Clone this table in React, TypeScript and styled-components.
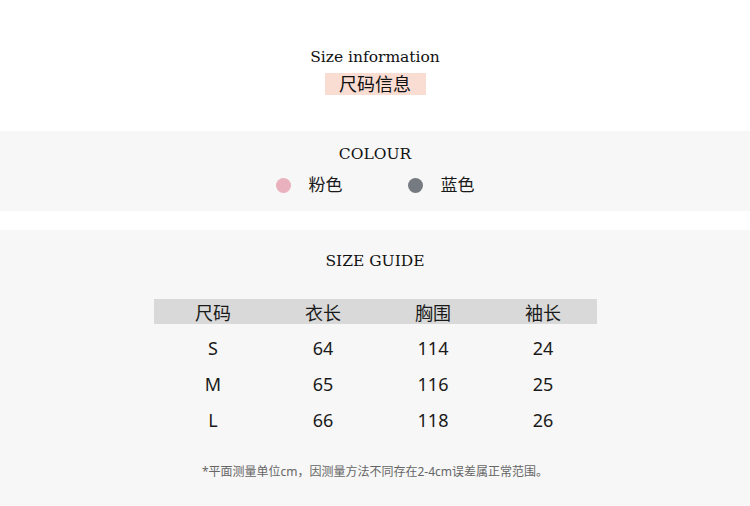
import React from "react";
import styled, { createGlobalStyle } from "styled-components";

const GlobalStyle = createGlobalStyle`
  html, body {
    margin: 0;
    padding: 0;
    background: #ffffff;
  }
  body {
    font-family: "Noto Sans", "Noto Sans CJK SC", sans-serif;
    color: #1a1a1a;
  }
`;

const colours = [
  { name: "粉色", color: "#e8b1bd" },
  { name: "蓝色", color: "#767b81" }
];

const headers = ["尺码", "衣长", "胸围", "袖长"];

const rows = [
  ["S", "64", "114", "24"],
  ["M", "65", "116", "25"],
  ["L", "66", "118", "26"]
];

const App: React.FunctionComponent = () => {
  return (
    <Page>
      <GlobalStyle />
      <Intro>
        <SerifTitle>Size information</SerifTitle>
        <Tag>尺码信息</Tag>
      </Intro>
      <ColourBand>
        <SerifTitle>COLOUR</SerifTitle>
        <Swatches>
          {colours.map(c => (
            <Swatch key={c.name}>
              <Dot color={c.color} />
              <SwatchName>{c.name}</SwatchName>
            </Swatch>
          ))}
        </Swatches>
      </ColourBand>
      <GuideBand>
        <SerifTitle>SIZE GUIDE</SerifTitle>
        <Table>
          <HeadRow>
            {headers.map(h => (
              <Cell key={h}>{h}</Cell>
            ))}
          </HeadRow>
          {rows.map(r => (
            <BodyRow key={r[0]}>
              {r.map((v, i) => (
                <Cell key={i}>{v}</Cell>
              ))}
            </BodyRow>
          ))}
        </Table>
        <Note>*平面测量单位cm，因测量方法不同存在2-4cm误差属正常范围。</Note>
      </GuideBand>
    </Page>
  );
};

export default App;

const Page = styled.div`
  width: 750px;
  height: 506px;
  display: flex;
  flex-direction: column;
  overflow: hidden;
`;

const SerifTitle = styled.div`
  font-family: "DejaVu Serif", serif;
  font-size: 15.5px;
  line-height: 20px;
  color: #111;
  text-align: center;
`;

const Intro = styled.section`
  height: 131px;
  display: flex;
  flex-direction: column;
  align-items: center;
  padding-top: 47px;
  box-sizing: border-box;
`;

const Tag = styled.div`
  margin-top: 6px;
  width: 101px;
  height: 22px;
  background: #f9ddd3;
  font-size: 18px;
  line-height: 22px;
  text-align: center;
  color: #111;
`;

const ColourBand = styled.section`
  height: 80px;
  background: #f7f7f7;
  display: flex;
  flex-direction: column;
  align-items: center;
  padding-top: 13px;
  box-sizing: border-box;
`;

const Swatches = styled.div`
  display: flex;
  gap: 65px;
  margin-top: 10px;
`;

const Swatch = styled.div`
  display: flex;
  align-items: center;
  gap: 18px;
`;

const Dot = styled.span<{ color: string }>`
  width: 15px;
  height: 15px;
  border-radius: 50%;
  background: ${({ color }) => color};
`;

const SwatchName = styled.span`
  font-size: 17px;
  line-height: 22px;
  color: #1a1a1a;
`;

const GuideBand = styled.section`
  flex: 1;
  margin-top: 19px;
  background: #f7f7f7;
  display: flex;
  flex-direction: column;
  align-items: center;
  padding-top: 21px;
  box-sizing: border-box;
`;

const Table = styled.div`
  margin-top: 28px;
  width: 443px;
  display: flex;
  flex-direction: column;
  margin-left: 1px;
`;

const HeadRow = styled.div`
  display: grid;
  grid-template-columns: repeat(4, 110px);
  padding-left: 4px;
  height: 25px;
  align-items: center;
  background: #d9d9d9;
  font-size: 18px;
`;

const BodyRow = styled.div`
  display: grid;
  grid-template-columns: repeat(4, 110px);
  padding-left: 4px;
  height: 36px;
  align-items: center;
  font-size: 18px;
  &:nth-child(2) {
    margin-top: 6px;
  }
`;

const Cell = styled.div`
  text-align: center;
  color: #1a1a1a;
`;

const Note = styled.div`
  margin-top: 24px;
  font-size: 12px;
  color: #666;
`;
